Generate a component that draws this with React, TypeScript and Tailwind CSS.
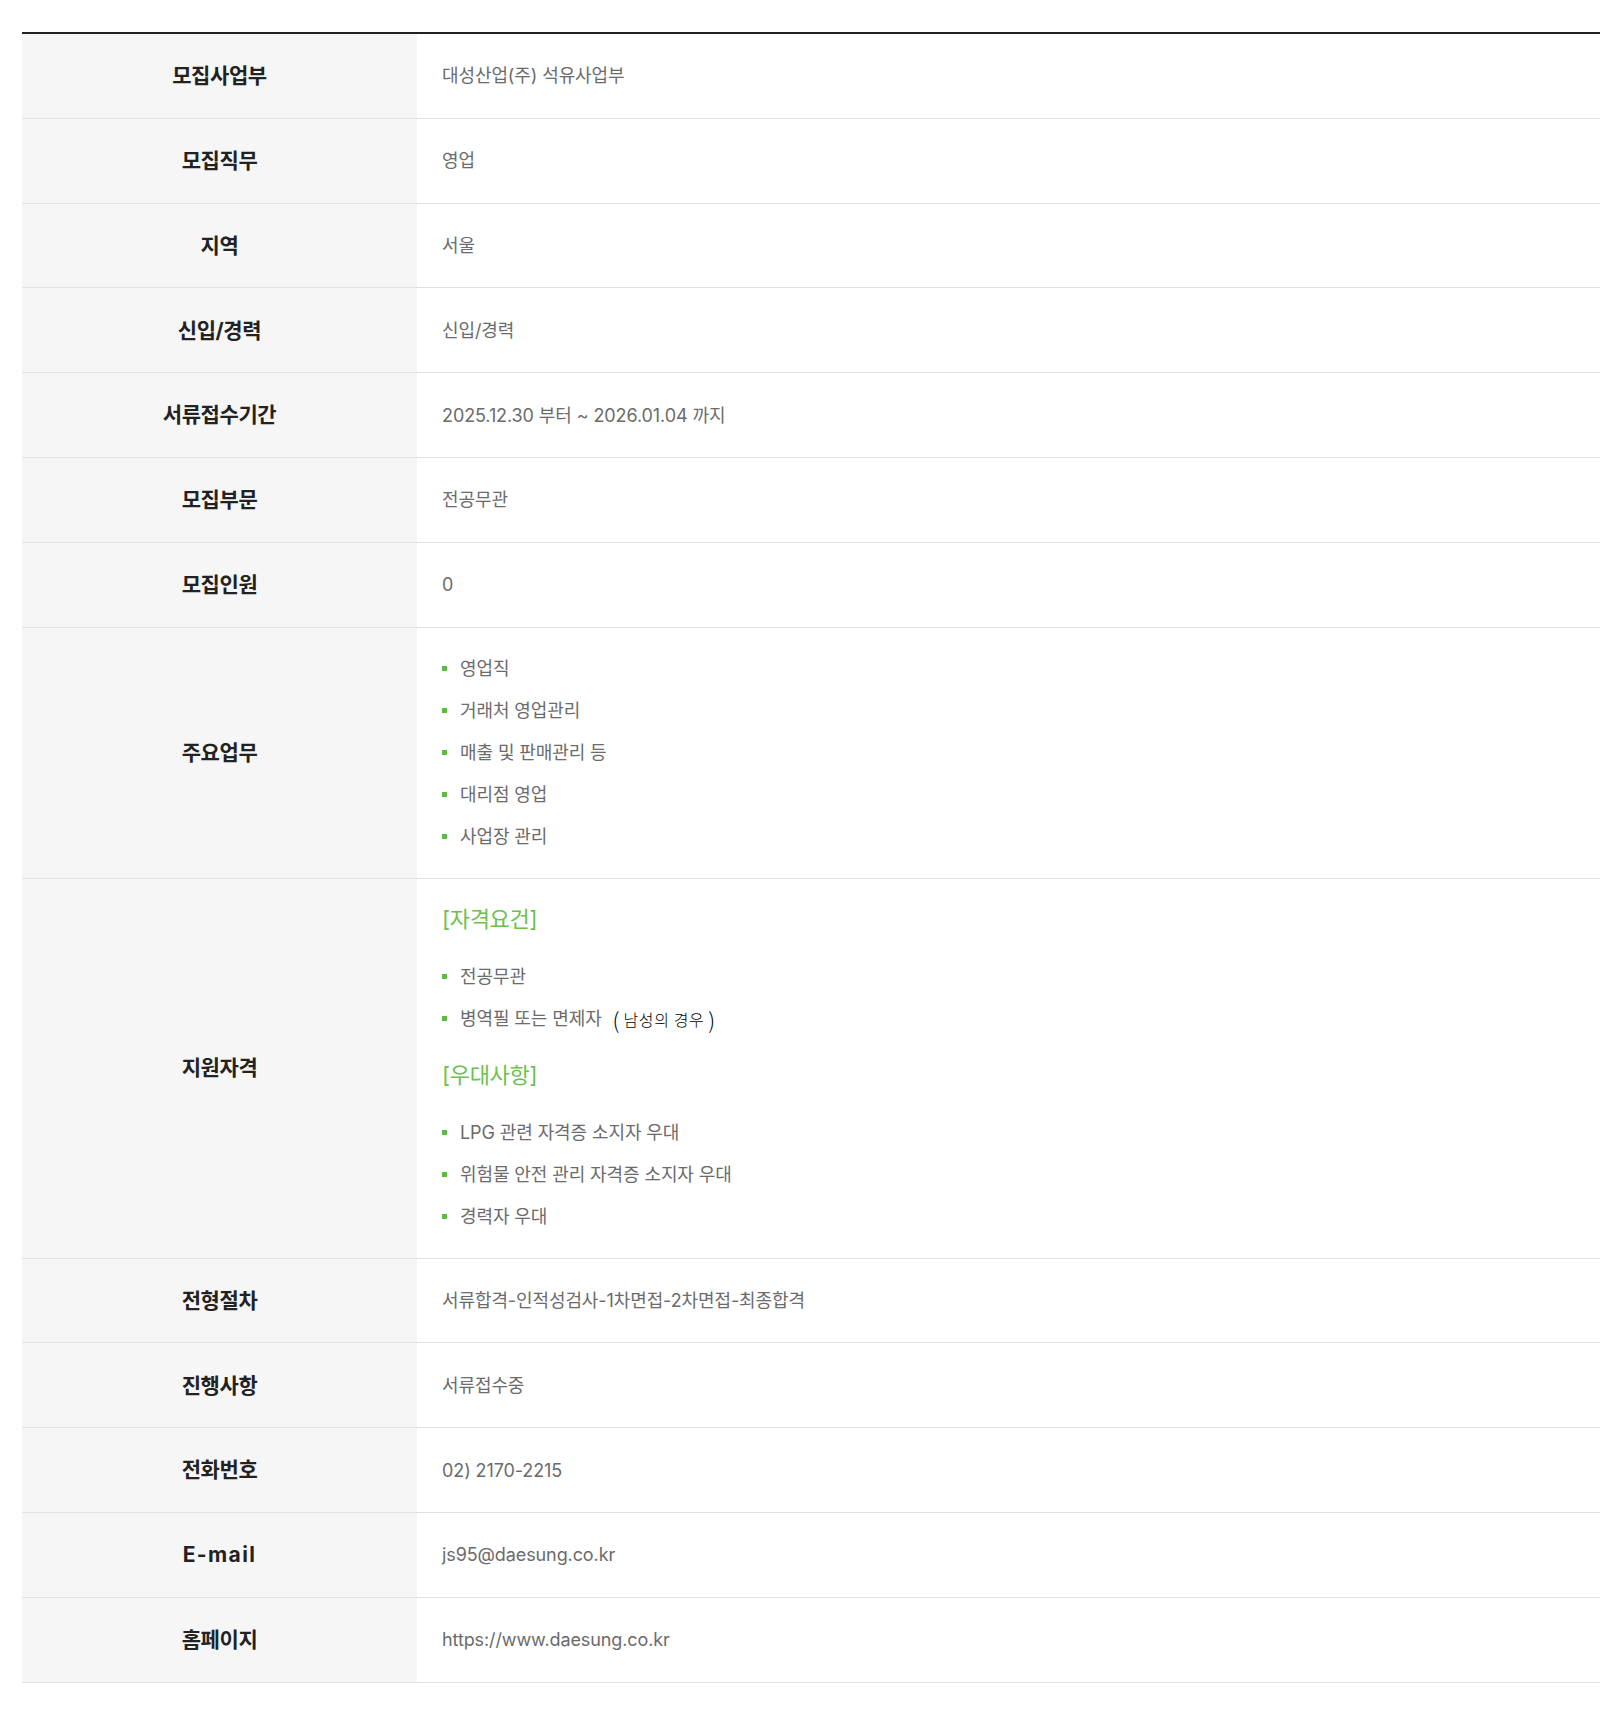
import React from "react";

type Row = {
  label: string;
  value?: React.ReactNode;
};

const sans = "font-['Inter','Noto_Sans_CJK_KR',sans-serif]";

function Bullets({ items }: { items: React.ReactNode[] }) {
  return (
    <ul className="flex flex-col">
      {items.map((item, i) => (
        <li key={i} className="flex items-center h-[42px]">
          <span className="w-[5px] h-[5px] bg-[#5cb941] shrink-0 mr-[13px]" />
          <span className="flex items-center">{item}</span>
        </li>
      ))}
    </ul>
  );
}

function Heading({ children }: { children: React.ReactNode }) {
  return (
    <p className="h-[42px] flex items-center text-[22px] tracking-[-0.3px] text-[#6cc04c]">
      {children}
    </p>
  );
}

const rows: Row[] = [
  { label: "모집사업부", value: "대성산업(주) 석유사업부" },
  { label: "모집직무", value: "영업" },
  { label: "지역", value: "서울" },
  { label: "신입/경력", value: "신입/경력" },
  { label: "서류접수기간", value: "2025.12.30 부터 ~ 2026.01.04 까지" },
  { label: "모집부문", value: "전공무관" },
  { label: "모집인원", value: "0" },
  {
    label: "주요업무",
    value: (
      <Bullets
        items={["영업직", "거래처 영업관리", "매출 및 판매관리 등", "대리점 영업", "사업장 관리"]}
      />
    ),
  },
  {
    label: "지원자격",
    value: (
      <div className="flex flex-col">
        <Heading>[자격요건]</Heading>
        <div className="mt-[15px]">
          <Bullets
            items={[
              "전공무관",
              <>
                병역필 또는 면제자
                <span className="ml-[11px] flex items-center text-black font-['Noto_Sans_CJK_KR',sans-serif] tracking-normal">
                  <span className="text-[22px] font-light leading-none">(</span>
                  <span className="mx-[4px] text-[16px] tracking-[0.6px] font-light">남성의 경우</span>
                  <span className="text-[22px] font-light leading-none">)</span>
                </span>
              </>,
            ]}
          />
        </div>
        <div className="mt-[15px]">
          <Heading>[우대사항]</Heading>
        </div>
        <div className="mt-[15px]">
          <Bullets
            items={[
              "LPG 관련 자격증 소지자 우대",
              "위험물 안전 관리 자격증 소지자 우대",
              "경력자 우대",
            ]}
          />
        </div>
      </div>
    ),
  },
  { label: "전형절차", value: "서류합격-인적성검사-1차면접-2차면접-최종합격" },
  { label: "진행사항", value: "서류접수중" },
  { label: "전화번호", value: "02) 2170-2215" },
  { label: "E-mail", value: "js95@daesung.co.kr" },
  { label: "홈페이지", value: "https://www.daesung.co.kr" },
];

export default function App() {
  return (
    <div className={`min-h-screen bg-white pt-8 pl-[22px] pr-2 ${sans}`}>
      <div className="border-t-2 border-[#222]">
        {rows.map((row) => (
          <div key={row.label} className="flex border-b border-[#e2e2e2]">
            <div className="w-[395px] shrink-0 bg-[#f6f6f6] flex items-center justify-center">
              {row.label === "E-mail" ? (
                <span className="text-[21px] font-bold text-[#222] tracking-[1.4px]">E-mail</span>
              ) : (
                <span className="text-[21px] font-bold text-[#222] tracking-[-0.4px]">{row.label}</span>
              )}
            </div>
            <div className="flex-1 min-h-[83.8px] flex items-center pl-[25px] py-5 text-[18px] tracking-[-0.1px] text-[#6b6b6b]">
              {row.value}
            </div>
          </div>
        ))}
      </div>
    </div>
  );
}
